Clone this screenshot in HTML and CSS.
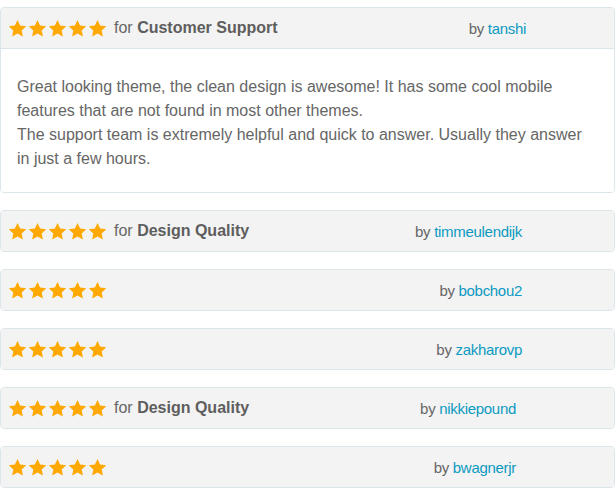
FILE: index.html
```html
<!DOCTYPE html>
<html lang="en">
<head>
  <meta charset="UTF-8" />
  <title>Reviews</title>
  <link rel="stylesheet" href="styles.css">
</head>
<body>
  <svg width="0" height="0" class="defs">
    <symbol id="star" viewBox="0 0 24 24">
      <path d="M12 1.2l3.3 7.1 7.7.9-5.7 5.3 1.5 7.7L12 18.4l-6.8 3.8 1.5-7.7L1 9.2l7.7-.9z"/>
    </symbol>
  </svg>

  <div class="reviews">
    <div class="review">
      <div class="review-head">
        <span class="stars">
          <svg><use href="#star"/></svg><svg><use href="#star"/></svg><svg><use href="#star"/></svg><svg><use href="#star"/></svg><svg><use href="#star"/></svg>
        </span>
        <span class="reason">for <strong>Customer Support</strong></span>
        <span class="author by-wide">by <a href="#">tanshi</a></span>
      </div>
      <div class="review-body">
        <p>Great looking theme, the clean design is awesome! It has some cool mobile features that are not found in most other themes.<br>
        The support team is extremely helpful and quick to answer. Usually they answer in just a few hours.</p>
      </div>
    </div>

    <div class="review">
      <div class="review-head">
        <span class="stars">
          <svg><use href="#star"/></svg><svg><use href="#star"/></svg><svg><use href="#star"/></svg><svg><use href="#star"/></svg><svg><use href="#star"/></svg>
        </span>
        <span class="reason">for <strong>Design Quality</strong></span>
        <span class="author">by <a href="#">timmeulendijk</a></span>
      </div>
    </div>

    <div class="review">
      <div class="review-head">
        <span class="stars">
          <svg><use href="#star"/></svg><svg><use href="#star"/></svg><svg><use href="#star"/></svg><svg><use href="#star"/></svg><svg><use href="#star"/></svg>
        </span>
        <span class="author">by <a href="#">bobchou2</a></span>
      </div>
    </div>

    <div class="review">
      <div class="review-head">
        <span class="stars">
          <svg><use href="#star"/></svg><svg><use href="#star"/></svg><svg><use href="#star"/></svg><svg><use href="#star"/></svg><svg><use href="#star"/></svg>
        </span>
        <span class="author">by <a href="#">zakharovp</a></span>
      </div>
    </div>

    <div class="review">
      <div class="review-head">
        <span class="stars">
          <svg><use href="#star"/></svg><svg><use href="#star"/></svg><svg><use href="#star"/></svg><svg><use href="#star"/></svg><svg><use href="#star"/></svg>
        </span>
        <span class="reason">for <strong>Design Quality</strong></span>
        <span class="author by-narrow">by <a href="#">nikkiepound</a></span>
      </div>
    </div>

    <div class="review">
      <div class="review-head">
        <span class="stars">
          <svg><use href="#star"/></svg><svg><use href="#star"/></svg><svg><use href="#star"/></svg><svg><use href="#star"/></svg><svg><use href="#star"/></svg>
        </span>
        <span class="author by-narrow">by <a href="#">bwagnerjr</a></span>
      </div>
    </div>
  </div>
</body>
</html>
```

FILE: styles.css
```css
body {
  margin: 0;
  padding: 7px 1px 0 0;
  font-family: "Liberation Sans", Arial, sans-serif;
  color: #666;
  background: #fff;
}

.defs {
  position: absolute;
}

.reviews {
  display: flex;
  flex-direction: column;
  gap: 17px;
}

.review {
  border: 1px solid #dce6ea;
  border-radius: 4px;
  overflow: hidden;
}

.review-head {
  display: flex;
  align-items: center;
  height: 40px;
  padding: 0 0 0 7px;
  background: #f3f3f3;
  font-size: 16px;
}

.stars {
  display: flex;
  gap: 1px;
  fill: #ffa800;
}

.stars svg {
  width: 19px;
  height: 19px;
}

.reason {
  margin-left: 7px;
}

.reason strong {
  font-weight: bold;
  color: #5e5e5e;
}

.author {
  margin-left: auto;
  margin-right: 92px;
  font-size: 15px;
  letter-spacing: -0.3px;
}

.author.by-wide {
  margin-right: 88px;
}

.author.by-narrow {
  margin-right: 98px;
}

.author a {
  color: #0c9ac2;
  text-decoration: none;
}

.review-body {
  border-top: 1px solid #dce6ea;
  background: #fff;
  padding: 26px 30px 21px 16px;
}

.review-body p {
  margin: 0;
  font-size: 16px;
  line-height: 24px;
}
```
